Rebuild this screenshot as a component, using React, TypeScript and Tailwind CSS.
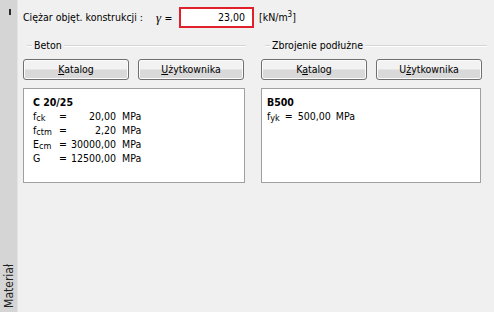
import type { ReactNode } from "react";

const font = "font-['DejaVu_Sans_Condensed','DejaVu_Sans',sans-serif]";

function GroupTitle({ children }: { children: ReactNode }) {
  return (
    <div className="flex h-[13px] items-center">
      <div className="ml-[4px] w-[5px] border-t border-b border-t-[#d5d5d5] border-b-white" />
      <span className="px-[2px] leading-[13px]">{children}</span>
      <div className="flex-1 border-t border-b border-t-[#d5d5d5] border-b-white" />
    </div>
  );
}

function Btn({ children }: { children: ReactNode }) {
  return (
    <div className="flex h-[21px] w-[106px] items-center justify-center rounded-[3px] border border-[#707070] bg-gradient-to-b from-[#f2f2f2] from-45% to-[#d9d9d9] to-55% shadow-[inset_0_0_0_1px_#fcfcfc]">
      {children}
    </div>
  );
}

function Sym({ base, sub }: { base: string; sub: string }) {
  return (
    <span>
      {base}
      <sub className="relative top-[1px] text-[9px] leading-none">{sub}</sub>
    </span>
  );
}

const betonRows = [
  { base: "f", sub: "ck", value: "20,00" },
  { base: "f", sub: "ctm", value: "2,20" },
  { base: "E", sub: "cm", value: "30000,00" },
  { base: "G", sub: "", value: "12500,00" },
];

export default function App() {
  return (
    <div className={`flex h-[312px] w-[494px] bg-[#f0f0f0] text-[10.5px] text-black ${font}`}>
      <div className="flex w-[18px] flex-col items-center justify-between border-r border-[#e4e4e4] bg-[#d5d5d5] pt-[9px] pb-[4px]">
        <div className="ml-[3px] h-[6px] w-[2px] bg-[#2a2a2a]" />
        <span className="rotate-180 text-[12px] leading-none text-[#222] [writing-mode:vertical-rl]">
          Materiał
        </span>
      </div>

      <div className="flex flex-1 flex-col pl-[5px] pt-[7px]">
        <div className="flex h-[21px] items-center">
          <span className="w-[133px]">Ciężar objęt. konstrukcji :</span>
          <span className="w-[23px] font-['Liberation_Serif',serif] text-[13px]">
            <i>γ</i>{" "}
            <span className="font-['DejaVu_Sans_Condensed','DejaVu_Sans',sans-serif] text-[10.5px]">=</span>
          </span>
          <div className="flex h-[21px] w-[75px] items-center justify-end border-2 border-[#e0202a] bg-white pr-[7px]">
            23,00
          </div>
          <span className="ml-[5px]">
            [kN/m<sup className="text-[8px]">3</sup>]
          </span>
        </div>

        <div className="mt-[11px] flex gap-[15px]">
          <div className="flex w-[223px] flex-col">
            <GroupTitle>Beton</GroupTitle>
            <div className="mt-[7px] flex gap-[9px]">
              <Btn>
                <span>
                  <u>K</u>atalog
                </span>
              </Btn>
              <Btn>
                <span>
                  <u>U</u>żytkownika
                </span>
              </Btn>
            </div>
            <div className="mt-[8px] h-[95px] w-[222px] border border-[#a0a0a0] bg-white pl-[9px] pt-[6px] leading-[14px]">
              <div className="font-bold">C 20/25</div>
              {betonRows.map((r) => (
                <div key={r.value} className="flex">
                  <span className="w-[26px]">
                    <Sym base={r.base} sub={r.sub} />
                  </span>
                  <span className="w-[10px]">=</span>
                  <span className="w-[47px] text-right">{r.value}</span>
                  <span className="ml-[6px]">MPa</span>
                </div>
              ))}
            </div>
          </div>

          <div className="flex w-[226px] flex-col">
            <GroupTitle>Zbrojenie podłużne</GroupTitle>
            <div className="mt-[7px] flex gap-[9px]">
              <Btn>
                <span>
                  K<u>a</u>talog
                </span>
              </Btn>
              <Btn>
                <span>
                  U<u>ż</u>ytkownika
                </span>
              </Btn>
            </div>
            <div className="mt-[8px] h-[95px] w-[220px] border border-[#a0a0a0] bg-white pl-[5px] pt-[6px] leading-[14px]">
              <div className="font-bold">B500</div>
              <div className="flex">
                <Sym base="f" sub="yk" />
                <span className="ml-[5px]">=</span>
                <span className="ml-[5px]">500,00</span>
                <span className="ml-[5px]">MPa</span>
              </div>
            </div>
          </div>
        </div>
      </div>
    </div>
  );
}
